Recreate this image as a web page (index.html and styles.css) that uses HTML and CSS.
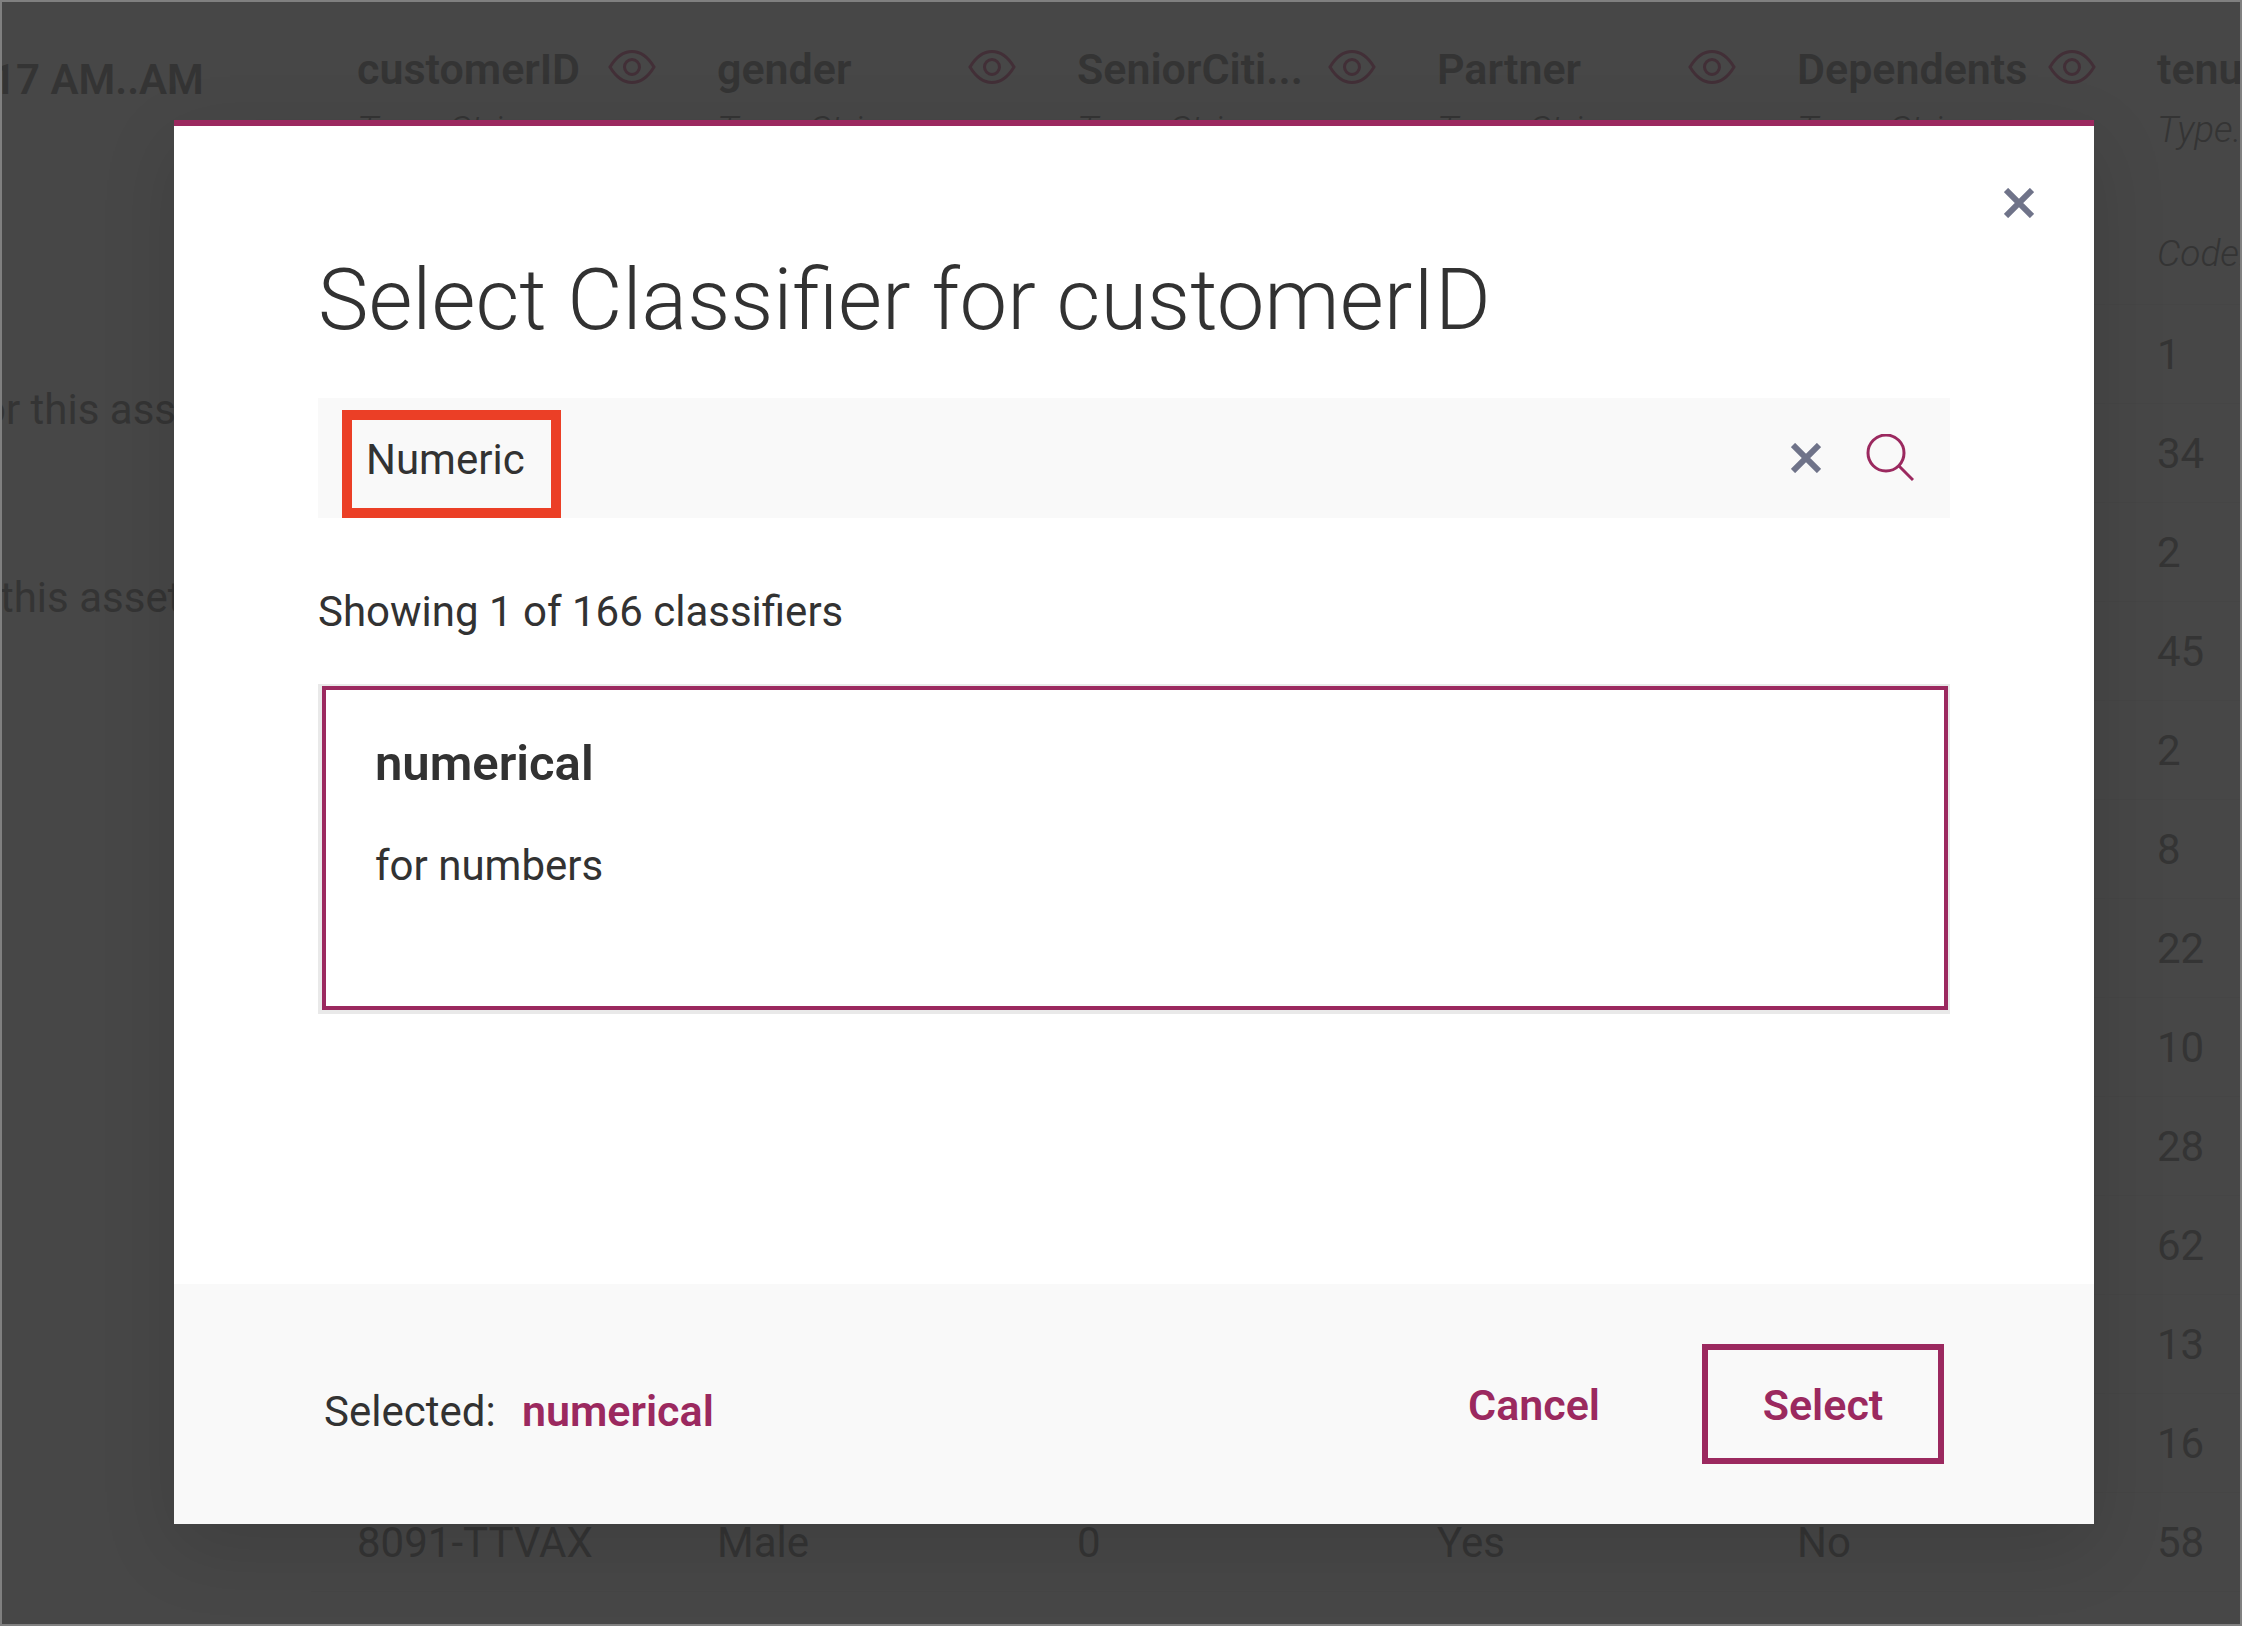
FILE: index.html
```html
<!DOCTYPE html>
<html lang="en">
<head>
<meta charset="utf-8">
<title>Select Classifier</title>
<link rel="stylesheet" href="styles.css">
</head>
<body>
<svg class="defs" aria-hidden="true">
  <symbol id="eye" viewBox="0 0 48 34"><path d="M2 17C8 7 15 1.500 24 1.500S40 7 46 17C40 27 33 32.500 24 32.500S8 27 2 17Z"/><circle cx="24" cy="17" r="7.500"/></symbol>
  <symbol id="cross" viewBox="0 0 30 30"><path d="M2 2 28 28M28 2 2 28"/></symbol>
</svg>
<div class="page">
  <aside class="details">
    <h2 class="details-title">17 AM..AM</h2>
    <p class="details-note">or this asset</p>
    <p class="details-note details-note-inset">this asset</p>
  </aside>
  <table class="data">
    <thead>
      <tr>
        <th><div class="col-name">customerID<svg class="eye"><use href="#eye"/></svg></div><div class="col-type">Type: String</div></th>
        <th><div class="col-name">gender<svg class="eye"><use href="#eye"/></svg></div><div class="col-type">Type: String</div></th>
        <th><div class="col-name">SeniorCiti...<svg class="eye"><use href="#eye"/></svg></div><div class="col-type">Type: String</div></th>
        <th><div class="col-name">Partner<svg class="eye"><use href="#eye"/></svg></div><div class="col-type">Type: String</div></th>
        <th><div class="col-name">Dependents<svg class="eye"><use href="#eye"/></svg></div><div class="col-type">Type: String</div></th>
        <th><div class="col-name">tenure</div><div class="col-type">Type...</div><div class="col-code">Code...</div></th>
      </tr>
    </thead>
    <tbody>
      <tr><td></td><td></td><td></td><td></td><td></td><td>1</td></tr>
      <tr><td></td><td></td><td></td><td></td><td></td><td>34</td></tr>
      <tr><td></td><td></td><td></td><td></td><td></td><td>2</td></tr>
      <tr><td></td><td></td><td></td><td></td><td></td><td>45</td></tr>
      <tr><td></td><td></td><td></td><td></td><td></td><td>2</td></tr>
      <tr><td></td><td></td><td></td><td></td><td></td><td>8</td></tr>
      <tr><td></td><td></td><td></td><td></td><td></td><td>22</td></tr>
      <tr><td></td><td></td><td></td><td></td><td></td><td>10</td></tr>
      <tr><td></td><td></td><td></td><td></td><td></td><td>28</td></tr>
      <tr><td></td><td></td><td></td><td></td><td></td><td>62</td></tr>
      <tr><td></td><td></td><td></td><td></td><td></td><td>13</td></tr>
      <tr><td></td><td></td><td></td><td></td><td></td><td>16</td></tr>
      <tr><td>8091-TTVAX</td><td>Male</td><td>0</td><td>Yes</td><td>No</td><td>58</td></tr>
    </tbody>
  </table>
</div>
<div class="overlay">
  <section class="modal" role="dialog" aria-modal="true" aria-labelledby="modal-title">
    <div class="modal-body">
      <button class="icon-button close" type="button" aria-label="Close"><svg class="cross"><use href="#cross"/></svg></button>
      <h1 class="modal-title" id="modal-title">Select Classifier for customerID</h1>
      <div class="search">
        <input class="search-input" type="text" value="Numeric" aria-label="Search classifiers">
        <button class="icon-button" type="button" aria-label="Clear"><svg class="cross"><use href="#cross"/></svg></button>
        <button class="icon-button" type="button" aria-label="Search"><svg class="magnifier" viewBox="0 0 48 48"><circle cx="20" cy="19" r="18"/><path d="M33 32 47 46"/></svg></button>
        <span class="highlight"></span>
      </div>
      <p class="count">Showing 1 of 166 classifiers</p>
      <button class="card" type="button">
        <span class="card-name">numerical</span>
        <span class="card-text">for numbers</span>
      </button>
    </div>
    <footer class="modal-footer">
      <p class="selected">Selected: <strong class="selected-name">numerical</strong></p>
      <button class="button" type="button">Cancel</button>
      <button class="button button-outlined" type="button">Select</button>
    </footer>
  </section>
</div>
</body>
</html>
```
FILE: styles.css
```css
* {
  box-sizing: border-box;
}

:root {
  --accent: #9b295f;
  --ink: #323232;
  --dim: #474747;
  --dim-ink: #343434;
}

body {
  position: relative;
  min-height: 100vh;
  margin: 0;
  background: var(--dim);
  color: var(--ink);
  font: 42px/48px Roboto, "Liberation Sans", sans-serif;
  overflow: hidden;
}

h1, h2, p {
  margin: 0;
}

button, input {
  padding: 0;
  border: 0;
  background: none;
  color: inherit;
  font: inherit;
}

.defs {
  position: absolute;
  width: 0;
  height: 0;
}

/* Dimmed page behind the dialog */
.page {
  display: flex;
  align-items: flex-start;
  height: 100vh;
  border: 2px solid #808080;
  color: var(--dim-ink);
  overflow: hidden;
}

.details {
  flex: none;
  width: 309px;
  padding-top: 54px;
  overflow: hidden;
  white-space: nowrap;
}

.details-title {
  margin: 0 0 282px -10px;
  font-size: 42px;
  font-weight: 600;
}

.details-note {
  margin: 0 0 140px -20px;
}

.details-note-inset {
  margin-left: -2px;
}

.data {
  flex: none;
  width: 2160px;
  table-layout: fixed;
  border-collapse: collapse;
}

.data th {
  height: 302px;
  padding: 42px 15px 0 46px;
  border-bottom: 1px solid #454545;
  font-weight: 400;
  text-align: left;
  vertical-align: top;
}

.data td {
  height: 99px;
  padding: 3px 15px 0 46px;
  border-bottom: 1px solid #454545;
}

.col-name {
  display: flex;
  align-items: center;
  justify-content: space-between;
  font-size: 43px;
  font-weight: 600;
  line-height: 50px;
}

.eye {
  width: 48px;
  height: 34px;
  margin-bottom: 4px;
  fill: none;
  stroke: #422f37;
  stroke-width: 3;
}

.col-type, .col-code {
  margin-top: 12px;
  font-size: 37px;
  font-style: italic;
  font-weight: 300;
}

.col-code {
  margin-top: 76px;
}

/* Dialog */
.overlay {
  position: absolute;
  inset: 0;
  padding: 120px 148px 102px 174px;
}

.modal {
  display: flex;
  flex-direction: column;
  height: 100%;
  border-top: 6px solid var(--accent);
  background: #fff;
  box-shadow: 0 24px 72px rgba(0, 0, 0, 0.12);
}

.modal-body {
  flex: 1;
  display: flex;
  flex-direction: column;
  padding: 48px 144px 0;
}

.icon-button {
  display: flex;
  align-items: center;
  justify-content: center;
  width: 58px;
  height: 58px;
}

.close {
  align-self: flex-end;
  margin-right: -98px;
}

.cross {
  width: 30px;
  height: 30px;
  fill: none;
  stroke: #6f7389;
  stroke-width: 6;
}

.magnifier {
  width: 48px;
  height: 48px;
  fill: none;
  stroke: var(--accent);
  stroke-width: 3;
}

.modal-title {
  margin: 18px 0 48px;
  font-size: 85px;
  line-height: 100px;
  font-weight: 300;
}

.search {
  position: relative;
  display: flex;
  align-items: center;
  gap: 26px;
  height: 120px;
  padding: 0 31px 0 48px;
  background: #f9f9f9;
}

.search-input {
  flex: 1;
  min-width: 0;
  height: 100%;
  padding-top: 2px;
}

.highlight {
  position: absolute;
  left: 24px;
  top: 12px;
  width: 219px;
  height: 108px;
  border: 10px solid #eb3f26;
  pointer-events: none;
}

.count {
  margin: 70px 0 48px;
}

.card {
  display: flex;
  flex-direction: column;
  gap: 54px;
  height: 324px;
  margin: 2px 2px 4px 4px;
  padding: 50px 49px;
  border: 4px solid var(--accent);
  box-shadow: -1px 1px 0 3px #e9e9e9;
  text-align: left;
}

.card-name {
  font-size: 49px;
  font-weight: 600;
}

.modal-footer {
  display: flex;
  align-items: center;
  height: 240px;
  padding: 0 150px;
  background: #f9f9f9;
}

.selected {
  flex: 1;
  padding-top: 14px;
}

.selected-name {
  margin-left: 16px;
  color: var(--accent);
  font-size: 43px;
  font-weight: 600;
}

.button {
  height: 120px;
  padding: 2px 48px 0;
  border: 6px solid transparent;
  color: var(--accent);
  font-size: 43px;
  font-weight: 600;
}

.button-outlined {
  width: 242px;
  margin-left: 48px;
  border-color: var(--accent);
}
```
